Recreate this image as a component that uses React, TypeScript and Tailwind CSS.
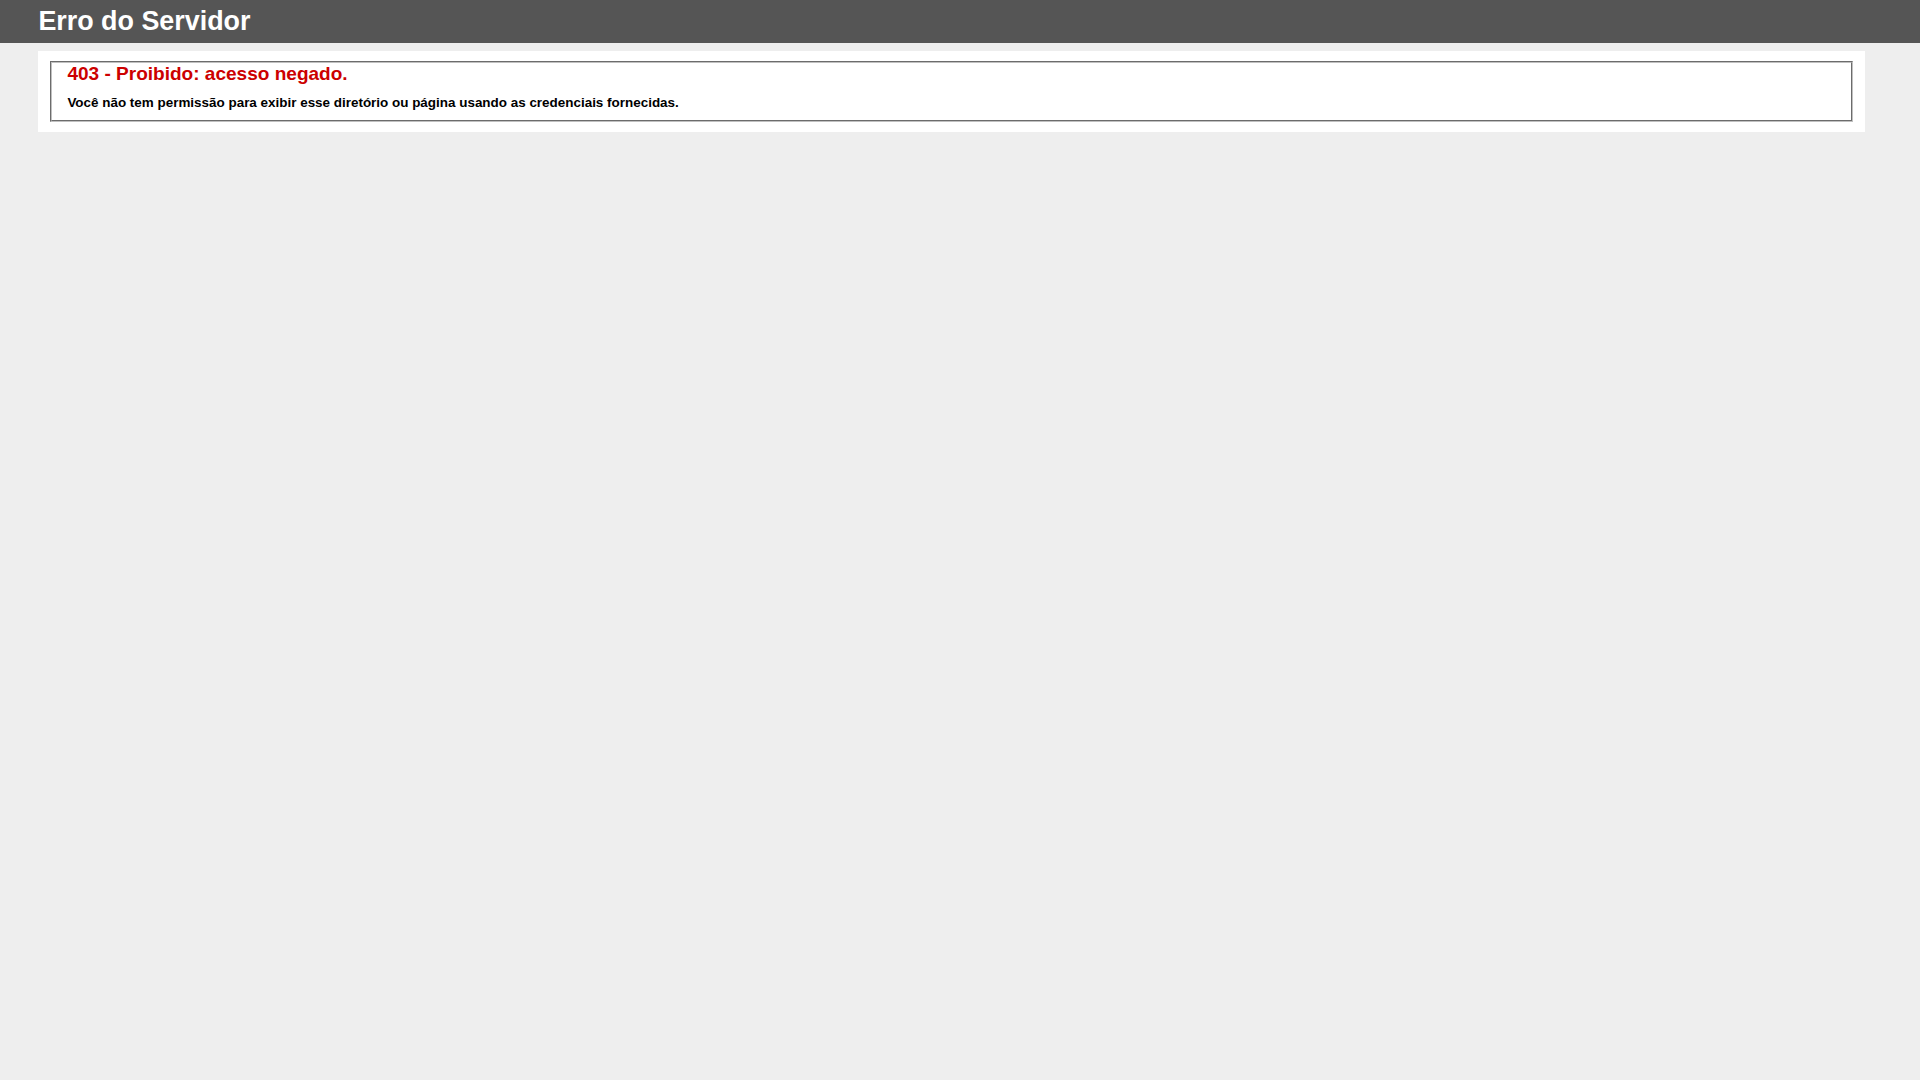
export default function App() {
  return (
    <div className="min-h-screen bg-[#eeeeee] text-[11.2px] leading-[normal] font-['Liberation_Sans',Arial,sans-serif]">
      <div className="box-content w-[96%] py-[6px] px-[2%] bg-[#555555] text-white">
        <h1 className="m-0 text-[26.88px] font-bold leading-[normal] text-white">Erro do Servidor</h1>
      </div>
      <div className="relative ml-[2%]">
        <div className="relative box-content w-[96%] mt-[8px] p-[10px] bg-white">
          <fieldset className="mx-[2px] border-2 [border-style:groove] border-[#c0c0c0] px-[15px] pb-[10px] pt-0">
            <h2 className="m-0 text-[19.04px] font-bold leading-[normal] text-[#cc0000]">403 - Proibido: acesso negado.</h2>
            <h3 className="mt-[10px] mb-0 text-[13.44px] font-bold leading-[normal] text-black">
              Você não tem permissão para exibir esse diretório ou página usando as credenciais fornecidas.
            </h3>
          </fieldset>
        </div>
      </div>
    </div>
  );
}
